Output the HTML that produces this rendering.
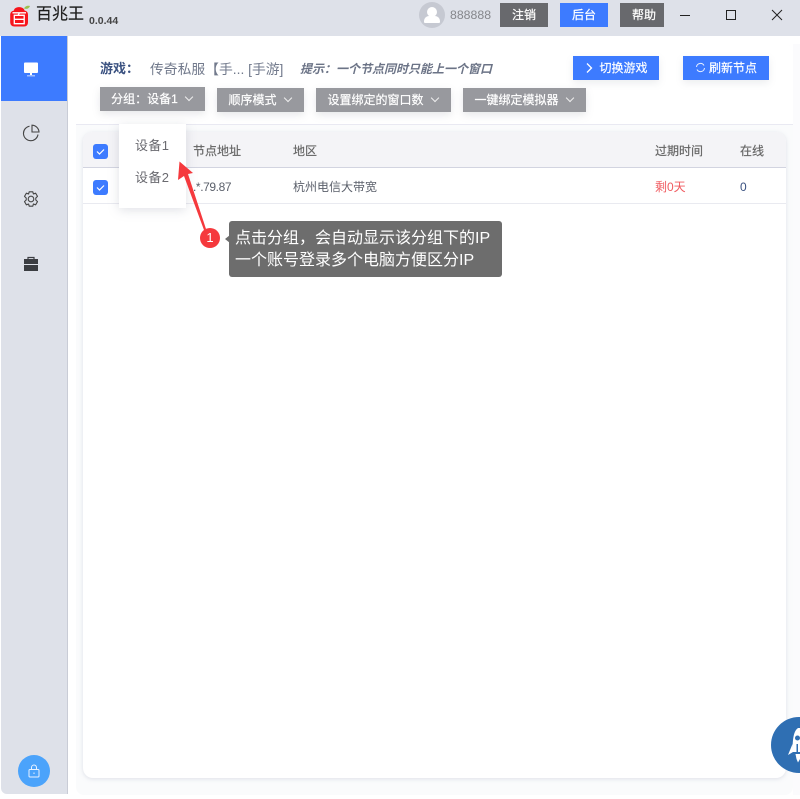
<!DOCTYPE html>
<html lang="zh">
<head>
<meta charset="utf-8">
<style>
html,body{margin:0;padding:0}
body{width:800px;height:799px;position:relative;overflow:hidden;background:#fff;font-family:"Liberation Sans","Noto Sans CJK SC",sans-serif;font-size:12px;color:#555}
.a{position:absolute;white-space:nowrap}
.btn{position:absolute;height:24px;line-height:24px;color:#fff;text-align:center;font-size:12px;white-space:nowrap;-webkit-text-stroke:.2px #fff}
.gray{background:#98999e;box-shadow:0 3px 8px rgba(120,125,140,.18)}
.blue{background:#3d7bff;box-shadow:0 3px 8px rgba(120,125,140,.14)}
.dark{background:#68696d;font-size:12px}
.chev{display:inline-block;width:5px;height:5px;border-right:1px solid #eee;border-bottom:1px solid #eee;transform:rotate(45deg);margin-left:8px;margin-right:2px;position:relative;top:-3px;-webkit-text-stroke:0}
.cb{position:absolute;left:93px;width:15px;height:15px;background:#3d7bff;border-radius:3px}
.cb svg{position:absolute;left:0;top:0}
.th{-webkit-text-stroke:.2px #666}
</style>
</head>
<body>
<!-- title bar -->
<div class="a" style="left:0;top:0;width:800px;height:36px;background:#dee1e9"></div>
<svg class="a" style="left:9px;top:4px" width="22" height="24" viewBox="0 0 22 24">
<path d="M5 6.5C5 2 15 2 15.5 6.5C18 7 19 8.5 19 11L19 18C19 21 17.5 22.5 15 22.5L5.5 22.5C3 22.5 1.2 21 1.2 18L1.2 11C1.2 8.5 2.5 7 5 6.5Z" fill="#f7141b"/>
<path d="M15 4.500C16.500 1.800 18.500 1.500 21 2C20 4.500 18 5.500 15 4.500Z" fill="#9cc04f"/>
<path d="M3.5 8.8H17M10.500 8.800L9 11.300M5.300 11.300H15.200V19.700H5.300ZM5.300 15.300H15.200" stroke="#fff" stroke-width="1.3" fill="none"/>
</svg>
<div class="a" style="left:36px;top:3px;font-size:16px;line-height:24px;color:#1c1c1c;-webkit-text-stroke:.2px #1c1c1c">百兆王</div>
<div class="a" style="left:89px;top:14px;font-size:10.5px;line-height:14px;color:#444;font-weight:bold">0.0.44</div>
<div class="a" style="left:419px;top:2px;width:26px;height:26px;border-radius:50%;background:#c6c9d2;overflow:hidden">
<div style="position:absolute;left:8px;top:5px;width:10px;height:10px;border-radius:50%;background:#fff"></div>
<div style="position:absolute;left:5px;top:14px;width:16px;height:7px;border-radius:5px 5px 1px 1px;background:#fff"></div>
</div>
<div class="a" style="left:450px;top:8px;font-size:12.3px;line-height:15px;color:#85868b">888888</div>
<div class="btn dark" style="left:500px;top:3px;width:48px">注销</div>
<div class="btn" style="left:560px;top:3px;width:48px;background:#3d7bff">后台</div>
<div class="btn dark" style="left:620px;top:3px;width:44px;text-indent:4px">帮助</div>
<svg class="a" style="left:670px;top:0" width="130" height="30" viewBox="0 0 130 30" fill="none" stroke="#222" stroke-width="1">
<path d="M10 15.5H20"/>
<rect x="56.5" y="10.5" width="9" height="9"/>
<path d="M102 10L112 20M112 10L102 20"/>
</svg>

<!-- sidebar -->
<div class="a" style="left:1px;top:36px;width:66px;height:758px;background:#dee1e9;border-right:1px solid #c9ccd6;border-radius:0 0 0 6px"></div>
<div class="a" style="left:1px;top:36px;width:66px;height:65px;background:#3d7bff"></div>
<svg class="a" style="left:22px;top:60px" width="18" height="18" viewBox="0 0 18 18">
<rect x="2" y="2.5" width="14" height="10.5" rx="1" fill="#fff"/>
<path d="M8 13H10V15H8ZM5 15.5H13V16.2H5Z" fill="#fff"/>
</svg>
<svg class="a" style="left:21px;top:123px" width="20" height="20" viewBox="0 0 20 20" fill="none" stroke="#444" stroke-width="1.1">
<path d="M8.5 3.2A7.3 7.3 0 1 0 17 11.5"/>
<path d="M11 2.2V9H18A7.2 7.2 0 0 0 11 2.2Z"/>
</svg>
<svg class="a" style="left:21px;top:189px" width="20" height="20" viewBox="0 0 20 20" fill="none" stroke="#444" stroke-width="1.1">
<path d="M8.2 2.8H11.8L12.4 5L14.6 4.2L16.5 7.4L14.8 9L14.8 11L16.5 12.6L14.6 15.8L12.4 15L11.8 17.2H8.2L7.6 15L5.4 15.8L3.5 12.6L5.2 11L5.2 9L3.5 7.4L5.4 4.2L7.6 5Z" stroke-linejoin="round"/>
<circle cx="10" cy="10" r="2.8"/>
</svg>
<svg class="a" style="left:22px;top:255px" width="18" height="18" viewBox="0 0 18 18">
<path d="M6 4.5V2.5H12V4.5" fill="none" stroke="#3b3d42" stroke-width="1.2"/>
<rect x="2" y="4" width="14" height="5" fill="#3b3d42"/>
<rect x="2" y="10" width="14" height="6" fill="#3b3d42"/>
</svg>
<div class="a" style="left:18px;top:755px;width:32px;height:32px;border-radius:50%;background:#4ba3fb"></div>
<svg class="a" style="left:26px;top:763px" width="16" height="16" viewBox="0 0 16 16" fill="none" stroke="#e8f2ff" stroke-width="1">
<rect x="3" y="6.5" width="10" height="7.5" rx="1"/>
<path d="M5.5 6.5V4.5A2.5 2.5 0 0 1 10.5 4.5V6.5"/>
<path d="M8 9.5V11"/>
</svg>

<!-- content panel -->
<div class="a" style="left:68px;top:36px;width:732px;height:763px;background:#fff"></div>
<div class="a" style="left:793px;top:44px;width:7px;height:751px;background:#fbfbfd"></div>
<div class="a" style="left:76px;top:44px;width:717px;height:751px;background:#fafbfc;border-radius:8px"></div>
<div class="a" style="left:76px;top:44px;width:717px;height:80px;background:#fff;border-radius:8px 8px 0 0;border-bottom:1px solid #e9e9f2"></div>

<div class="a" style="left:100px;top:60px;font-size:13px;line-height:18px;font-weight:bold;color:#3a5180">游戏：</div>
<div class="a" style="left:150px;top:61px;font-size:13.8px;line-height:18px;color:#727a8c">传奇私服【手... [手游]</div>
<div class="a" style="left:300px;top:60px;font-size:12px;line-height:18px;font-weight:bold;font-style:italic;color:#6b7386">提示：一个节点同时只能上一个窗口</div>

<div class="btn blue" style="left:573px;top:56px;width:86px"><svg width="10" height="12" viewBox="0 0 10 12" style="vertical-align:-2px;margin-right:5px"><path d="M3 1.5L7.5 6L3 10.5" fill="none" stroke="#fff" stroke-width="1.3"/></svg>切换游戏</div>
<div class="btn blue" style="left:683px;top:56px;width:86px"><svg width="11" height="11" viewBox="0 0 11 11" style="vertical-align:-1px;margin-right:3px" fill="none" stroke="#e6eeff" stroke-width="1"><path d="M1.5 5A4 4 0 0 1 9 3.5M9.5 6A4 4 0 0 1 2 7.5"/></svg>刷新节点</div>

<div class="btn gray" style="left:100px;top:87px;width:105px">分组：设备1<span class="chev"></span></div>
<div class="btn gray" style="left:217px;top:88px;width:87px">顺序模式<span class="chev"></span></div>
<div class="btn gray" style="left:316px;top:88px;width:135px">设置绑定的窗口数<span class="chev"></span></div>
<div class="btn gray" style="left:463px;top:88px;width:123px">一键绑定模拟器<span class="chev"></span></div>

<!-- table card -->
<div class="a" style="left:83px;top:132px;width:703px;height:646px;background:#fff;border-radius:10px;box-shadow:0 1px 4px rgba(170,175,195,.35)"></div>
<div class="a" style="left:83px;top:132px;width:703px;height:35px;background:#f4f4f7;border-radius:10px 10px 0 0;border-bottom:1px solid #d2d4e0"></div>
<div class="a" style="left:83px;top:203px;width:703px;height:1px;background:#e9eaf0"></div>
<div class="cb" style="top:144px"><svg width="15" height="15" viewBox="0 0 15 15"><path d="M4 7.5L6.5 10L11 5.5" fill="none" stroke="#fff" stroke-width="1.2"/></svg></div>
<div class="cb" style="top:180px"><svg width="15" height="15" viewBox="0 0 15 15"><path d="M4 7.5L6.5 10L11 5.5" fill="none" stroke="#fff" stroke-width="1.2"/></svg></div>
<div class="a th" style="left:193px;top:142px;line-height:18px;color:#666">节点地址</div>
<div class="a th" style="left:293px;top:142px;line-height:18px;color:#666">地区</div>
<div class="a th" style="left:655px;top:142px;line-height:18px;color:#666">过期时间</div>
<div class="a th" style="left:740px;top:142px;line-height:18px;color:#666">在线</div>
<div class="a" style="left:193px;top:178px;line-height:18px;color:#5a5f6a;letter-spacing:-.4px">.*.79.87</div>
<div class="a" style="left:293px;top:178px;line-height:18px;color:#5a5f6a">杭州电信大带宽</div>
<div class="a" style="left:655px;top:178px;line-height:18px;color:#f05a5f">剩0天</div>
<div class="a" style="left:740px;top:178px;line-height:18px;color:#3a5180">0</div>

<!-- dropdown -->
<div class="a" style="left:119px;top:124px;width:67px;height:84px;background:#fff;box-shadow:0 2px 10px rgba(130,135,155,.25)"></div>
<div class="a" style="left:135px;top:137px;font-size:13px;line-height:18px;color:#6a6a70;letter-spacing:.4px">设备1</div>
<div class="a" style="left:135px;top:169px;font-size:13px;line-height:18px;color:#6a6a70;letter-spacing:.4px">设备2</div>

<!-- annotation -->
<svg class="a" style="left:170px;top:150px" width="50" height="90" viewBox="0 0 50 90">
<path d="M9.5 11.5L8 30L14 26L34 80L36 79L18 24L23 23Z" fill="#f5393d"/>
</svg>
<div class="a" style="left:200px;top:228px;width:20px;height:20px;border-radius:50%;background:#f5393d;color:#fff;font-size:13px;line-height:20px;text-align:center">1</div>
<div class="a" style="left:225px;top:235px;width:0;height:0;border:4px solid transparent;border-right:5px solid #6d6d6d;border-left:0"></div>
<div class="a" style="left:229px;top:221px;width:273px;height:56px;background:#6d6d6d;border-radius:3px"></div>
<div class="a" style="left:235px;top:228px;font-size:16px;line-height:22px;color:#fff">点击分组，会自动显示该分组下的IP<br>一个账号登录多个电脑方便区分IP</div>

<!-- floating rocket -->
<div class="a" style="left:771px;top:717px;width:56px;height:56px;border-radius:50%;background:#2f6fb3"></div>
<svg class="a" style="left:786px;top:726px" width="14" height="38" viewBox="0 0 14 38">
<path d="M12 2C8 5 6.5 11 6.5 26H14V2Z" fill="#fff"/>
<path d="M6.5 18L2 29L7 26Z" fill="#fff"/>
<path d="M9.5 28H14V33L12 36.5L10.5 33Z" fill="#fff"/>
<circle cx="11.500" cy="12" r="2.5" fill="#2f6fb3"/>
<path d="M10.5 18H12V26H10.5Z" fill="#2f6fb3"/>
</svg>
</body>
</html>
